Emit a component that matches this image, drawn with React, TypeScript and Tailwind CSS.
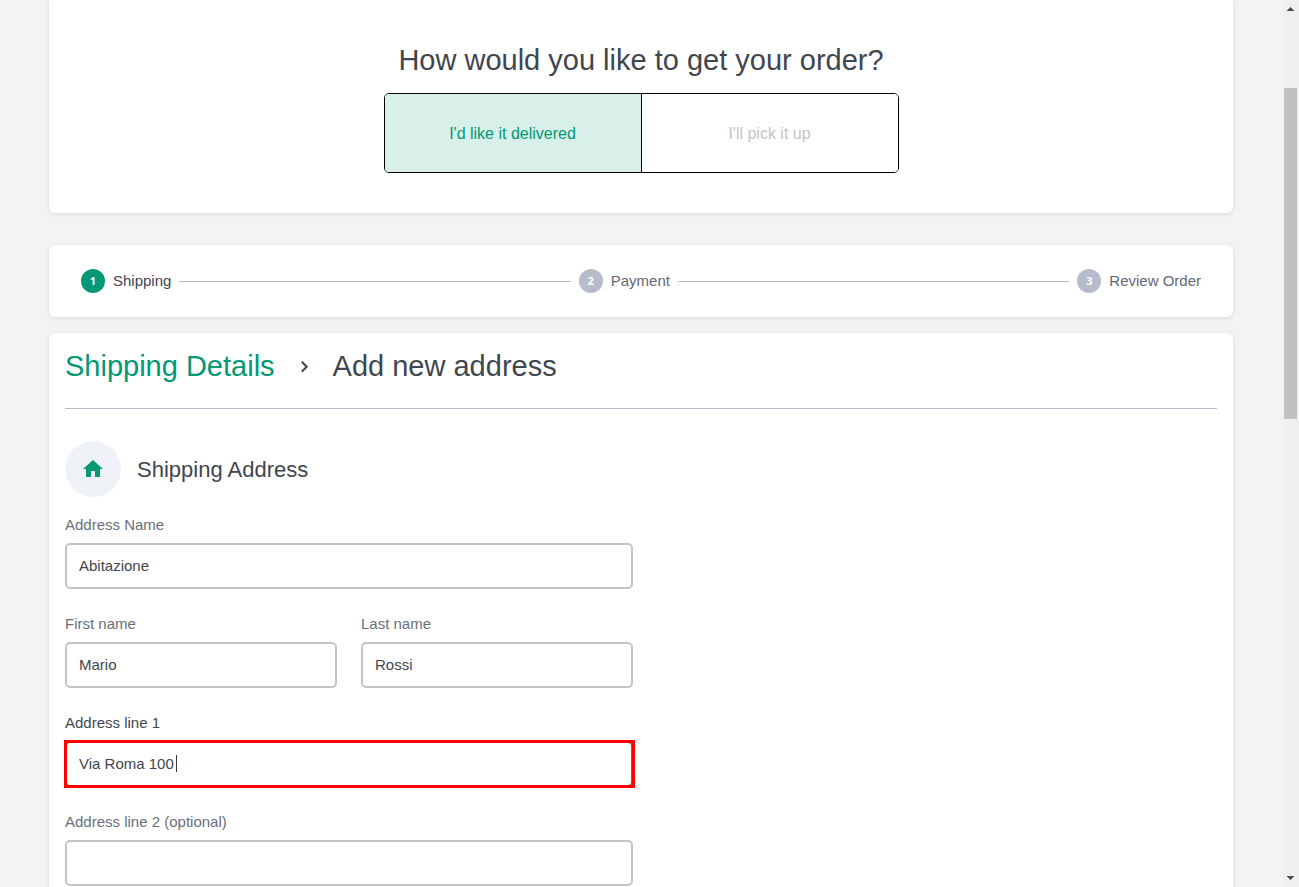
import { Fragment, useState } from "react";

type Step = { id: number; label: string };

const steps: Step[] = [
  { id: 1, label: "Shipping" },
  { id: 2, label: "Payment" },
  { id: 3, label: "Review Order" },
];

function DeliveryChoice() {
  return (
    <section className="rounded-b-md bg-white px-4 pt-[42px] pb-10 shadow-[0_1px_4px_rgba(0,0,0,0.12)]">
      <h1 className="text-center text-[29px] leading-9">How would you like to get your order?</h1>
      <div className="mx-auto mt-[15px] flex h-20 w-full max-w-[515px] overflow-hidden rounded-[5px] border border-black text-base">
        <button type="button" aria-pressed="true" className="flex-1 border-r border-black bg-[#d9efe9] pt-0.5 text-[#029874]">
          I'd like it delivered
        </button>
        <button type="button" aria-pressed="false" className="flex-1 bg-white pt-0.5 text-[#c4c4c4]">
          I'll pick it up
        </button>
      </div>
    </section>
  );
}

function Stepper() {
  return (
    <ol className="mt-8 flex h-18 items-center gap-2 rounded-md bg-white px-8 text-[15px] shadow-[0_1px_4px_rgba(0,0,0,0.12)]">
      {steps.map((step, index) => (
        <Fragment key={step.id}>
          {index > 0 && <li aria-hidden="true" className="h-px flex-1 bg-[#b9b9b9]" />}
          <li className={index === 0 ? "flex items-center gap-2" : "flex items-center gap-2 text-[#5f6875]"}>
            <span
              className={
                index === 0
                  ? "flex size-6 items-center justify-center rounded-full bg-[#029874] font-['Open_Sans',sans-serif] text-[11px] font-bold text-white"
                  : "flex size-6 items-center justify-center rounded-full bg-[#b5bdcc] font-['Open_Sans',sans-serif] text-[11px] font-bold text-white"
              }
            >
              {step.id}
            </span>
            {step.label}
          </li>
        </Fragment>
      ))}
    </ol>
  );
}

type FieldProps = { id: string; label: string; initial?: string; active?: boolean };

function Field({ id, label, initial = "", active = false }: FieldProps) {
  const [value, setValue] = useState(initial);
  return (
    <div className="min-w-0 flex-1 text-[15px]">
      <label htmlFor={id} className={active ? "block leading-6" : "block leading-6 text-[#6a707a]"}>
        {label}
      </label>
      <div className="relative mt-1.5">
        <input
          id={id}
          value={value}
          onChange={(event) => setValue(event.target.value)}
          className={
            active
              ? "block h-[46px] w-full rounded-[5px] border-2 border-[#029874] bg-white px-3 pb-0.5 outline-none"
              : "block h-[46px] w-full rounded-[5px] border-2 border-[#c4c4c4] bg-white px-3 pb-0.5 outline-none"
          }
        />
        {active && (
          <>
            <span className="pointer-events-none absolute top-[14px] left-[111px] h-[17px] w-px bg-[#34383f]" />
            <span className="pointer-events-none absolute -top-px -right-0.5 -bottom-px -left-px border-3 border-[#ff0000]" />
          </>
        )}
      </div>
    </div>
  );
}

function AddressForm() {
  return (
    <section className="mt-4 rounded-t-md bg-white px-4 pt-[13px] shadow-[0_1px_4px_rgba(0,0,0,0.12)]">
      <nav aria-label="Breadcrumb" className="flex items-center border-b border-[#b5bdcc] pb-[22px] text-[29px] leading-10">
        <a href="#shipping" className="text-[#029874]">
          Shipping Details
        </a>
        <svg viewBox="0 0 24 24" className="mx-[17px] size-6" fill="none" stroke="currentColor" strokeWidth="2" aria-hidden="true">
          <path d="M9.8 7.7 14.7 12.7 9.8 17.7" />
        </svg>
        <span>Add new address</span>
      </nav>
      <div className="mt-8 flex items-center gap-4">
        <span className="flex size-14 items-center justify-center rounded-full bg-[#eff3f7]">
          <svg viewBox="0 0 24 24" className="size-6 fill-[#029874]" aria-hidden="true">
            <path d="M10 20v-6h4v6h5v-8h3L12 3 2 12h3v8z" />
          </svg>
        </span>
        <h2 className="text-[22px]">Shipping Address</h2>
      </div>
      <form className="mt-4 flex max-w-[568px] flex-col gap-[23px]">
        <Field id="address-name" label="Address Name" initial="Abitazione" />
        <div className="flex gap-6">
          <Field id="first-name" label="First name" initial="Mario" />
          <Field id="last-name" label="Last name" initial="Rossi" />
        </div>
        <Field id="address-1" label="Address line 1" initial="Via Roma 100" active />
        <Field id="address-2" label="Address line 2 (optional)" />
      </form>
      <div className="h-10" />
    </section>
  );
}

function Scrollbar() {
  return (
    <div aria-hidden="true" className="flex w-[17px] shrink-0 flex-col items-center bg-[#f0f0f0]">
      <svg viewBox="0 0 17 17" className="h-[17px] w-[17px] fill-[#505050]" shapeRendering="crispEdges">
        <path d="M8 7h1v1h1v1h1v1h1v1H5v-1h1V9h1V8h1z" />
      </svg>
      <div className="h-[8%]" />
      <div className="h-[37.3%] w-[13px] bg-[#c1c1c1]" />
      <svg viewBox="0 0 17 17" className="mt-auto h-[17px] w-[17px] fill-[#505050]" shapeRendering="crispEdges">
        <path d="M5 6h7v1h-1v1h-1v1H9v1H8V9H7V8H6V7H5z" />
      </svg>
    </div>
  );
}

export default function App() {
  return (
    <div className="flex h-screen overflow-hidden bg-[#f3f3f3] font-['Liberation_Sans',Arial,sans-serif] text-[#3f464d]">
      <main className="min-w-0 flex-1 overflow-hidden px-[49px]">
        <DeliveryChoice />
        <Stepper />
        <AddressForm />
      </main>
      <Scrollbar />
    </div>
  );
}
